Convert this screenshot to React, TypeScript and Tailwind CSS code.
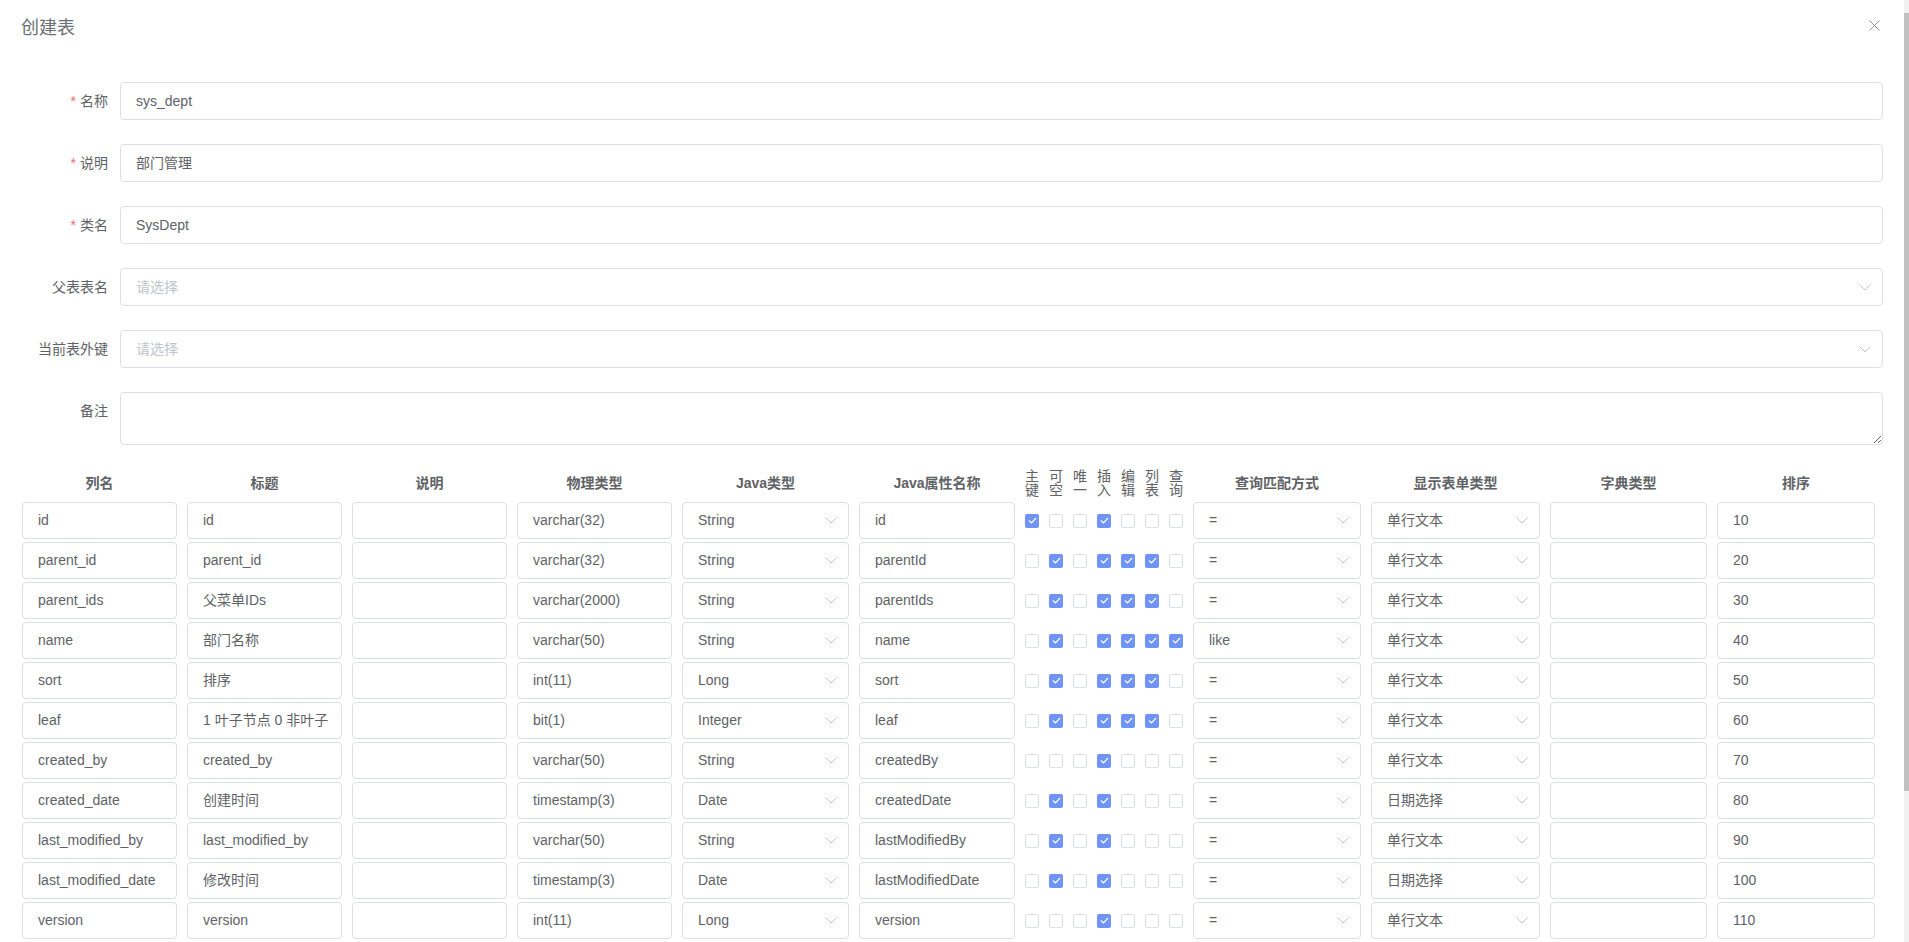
import React from "react";

const FONT = { fontFamily: '"Liberation Sans", Arial, "Noto Sans CJK SC", sans-serif' };

function Chevron() {
  return (
    <svg width="12" height="7" viewBox="0 0 12 7" className="shrink-0">
      <polyline points="0.5,0.5 6,6 11.5,0.5" fill="none" stroke="#c0c4cc" strokeWidth="1" />
    </svg>
  );
}

function Check({ on }: { on: boolean }) {
  if (on)
    return (
      <div className="w-[14px] h-[14px] rounded-[2px] bg-[#7094f6] flex items-center justify-center shrink-0">
        <svg width="9" height="7" viewBox="0 0 9 7">
          <polyline points="1,3.5 3.5,6 8,1" fill="none" stroke="#ffffff" strokeWidth="1.2" />
        </svg>
      </div>
    );
  return <div className="w-[14px] h-[14px] rounded-[2px] border border-[#dcdfe6] bg-white shrink-0" />;
}

function Cell({ w, text }: { w: string; text: string }) {
  return (
    <div className={`${w} h-[37px] border border-[#dcdfe6] rounded-[4px] px-[15px] flex items-center text-[14px] text-[#606266] whitespace-nowrap overflow-hidden shrink-0`}>
      {text}
    </div>
  );
}

function Sel({ w, text }: { w: string; text: string }) {
  return (
    <div className={`${w} h-[37px] border border-[#dcdfe6] rounded-[4px] pl-[15px] pr-[11px] flex items-center justify-between text-[14px] text-[#606266] whitespace-nowrap shrink-0`}>
      <span>{text}</span>
      <Chevron />
    </div>
  );
}

type Row = [string, string, string, string, string, string, number[], string, string, string];

const rows: Row[] = [
  ["id", "id", "", "varchar(32)", "String", "id", [1, 0, 0, 1, 0, 0, 0], "=", "单行文本", "10"],
  ["parent_id", "parent_id", "", "varchar(32)", "String", "parentId", [0, 1, 0, 1, 1, 1, 0], "=", "单行文本", "20"],
  ["parent_ids", "父菜单IDs", "", "varchar(2000)", "String", "parentIds", [0, 1, 0, 1, 1, 1, 0], "=", "单行文本", "30"],
  ["name", "部门名称", "", "varchar(50)", "String", "name", [0, 1, 0, 1, 1, 1, 1], "like", "单行文本", "40"],
  ["sort", "排序", "", "int(11)", "Long", "sort", [0, 1, 0, 1, 1, 1, 0], "=", "单行文本", "50"],
  ["leaf", "1 叶子节点 0 非叶子", "", "bit(1)", "Integer", "leaf", [0, 1, 0, 1, 1, 1, 0], "=", "单行文本", "60"],
  ["created_by", "created_by", "", "varchar(50)", "String", "createdBy", [0, 0, 0, 1, 0, 0, 0], "=", "单行文本", "70"],
  ["created_date", "创建时间", "", "timestamp(3)", "Date", "createdDate", [0, 1, 0, 1, 0, 0, 0], "=", "日期选择", "80"],
  ["last_modified_by", "last_modified_by", "", "varchar(50)", "String", "lastModifiedBy", [0, 1, 0, 1, 0, 0, 0], "=", "单行文本", "90"],
  ["last_modified_date", "修改时间", "", "timestamp(3)", "Date", "lastModifiedDate", [0, 1, 0, 1, 0, 0, 0], "=", "日期选择", "100"],
  ["version", "version", "", "int(11)", "Long", "version", [0, 0, 0, 1, 0, 0, 0], "=", "单行文本", "110"],
];

const cbHeads = [["主", "键"], ["可", "空"], ["唯", "一"], ["插", "入"], ["编", "辑"], ["列", "表"], ["查", "询"]];

function FormRow({ label, required, children, tall }: { label: string; required?: boolean; children: React.ReactNode; tall?: boolean }) {
  return (
    <div className={`flex ${tall ? "h-[53px]" : "h-[38px]"}`}>
      <div className="w-[99px] shrink-0 pr-[12px] text-right text-[14px] leading-[38px] text-[#606266] whitespace-nowrap">
        {required && <span className="text-[#f56c6c] mr-[4px]">*</span>}
        {label}
      </div>
      <div className="flex-1">{children}</div>
    </div>
  );
}

function TextBox({ value }: { value: string }) {
  return (
    <div className="h-[38px] border border-[#dcdfe6] rounded-[4px] px-[15px] flex items-center text-[14px] text-[#606266]">{value}</div>
  );
}

function SelBox() {
  return (
    <div className="h-[38px] border border-[#dcdfe6] rounded-[4px] pl-[15px] pr-[11px] flex items-center justify-between text-[14px] text-[#c0c4cc]">
      <span>请选择</span>
      <Chevron />
    </div>
  );
}

const W = {
  a: "w-[155px]",
  jt: "w-[167px]",
  jn: "w-[156px]",
  q: "w-[168px]",
  f: "w-[169px]",
  d: "w-[157px]",
  s: "w-[158px]",
};

function Head({ w, text }: { w: string; text: string }) {
  return <div className={`${w} shrink-0 text-center text-[14px] font-bold text-[#606266]`}>{text}</div>;
}

export default function App() {
  return (
    <div className="flex w-full h-[942px] overflow-hidden bg-white" style={FONT}>
      <div className="flex-1 min-w-0 flex flex-col">
        <div className="h-[82px] shrink-0 px-[21px] pt-[18px] flex justify-between items-start">
          <div className="text-[18px] leading-[20px] text-[#6b6e73]">创建表</div>
          <svg width="11" height="11" viewBox="0 0 11 11" className="mt-[2px] mr-[3px]">
            <path d="M0.5 0.5 L10.5 10.5 M10.5 0.5 L0.5 10.5" stroke="#909399" strokeWidth="1" fill="none" />
          </svg>
        </div>

        <div className="px-[21px] flex flex-col gap-[24px]">
          <FormRow label="名称" required>
            <TextBox value="sys_dept" />
          </FormRow>
          <FormRow label="说明" required>
            <TextBox value="部门管理" />
          </FormRow>
          <FormRow label="类名" required>
            <TextBox value="SysDept" />
          </FormRow>
          <FormRow label="父表表名">
            <SelBox />
          </FormRow>
          <FormRow label="当前表外键">
            <SelBox />
          </FormRow>
          <FormRow label="备注" tall>
            <textarea
              className="block w-full h-[53px] border border-[#dcdfe6] rounded-[4px] px-[15px] py-[5px] text-[14px] text-[#606266] resize-y outline-none"
              readOnly
            />
          </FormRow>
        </div>

        <div className="pl-[22px] mt-[21px]">
          <div className="flex gap-[10px] h-[34px] items-center">
            <Head w={W.a} text="列名" />
            <Head w={W.a} text="标题" />
            <Head w={W.a} text="说明" />
            <Head w={W.a} text="物理类型" />
            <Head w={W.jt} text="Java类型" />
            <Head w={W.jn} text="Java属性名称" />
            <div className="w-[158px] shrink-0 flex gap-[10px] text-[14px] leading-[14px] text-[#606266]">
              {cbHeads.map((h, i) => (
                <div key={i} className="w-[14px] flex flex-col items-center">
                  <span>{h[0]}</span>
                  <span>{h[1]}</span>
                </div>
              ))}
            </div>
            <Head w={W.q} text="查询匹配方式" />
            <Head w={W.f} text="显示表单类型" />
            <Head w={W.d} text="字典类型" />
            <Head w={W.s} text="排序" />
          </div>

          <div className="mt-[2px] flex flex-col gap-[3px]">
            {rows.map((r, i) => (
              <div key={i} className="flex gap-[10px] items-center">
                <Cell w={W.a} text={r[0]} />
                <Cell w={W.a} text={r[1]} />
                <Cell w={W.a} text={r[2]} />
                <Cell w={W.a} text={r[3]} />
                <Sel w={W.jt} text={r[4]} />
                <Cell w={W.jn} text={r[5]} />
                <div className="w-[158px] shrink-0 flex gap-[10px]">
                  {r[6].map((c, j) => (
                    <Check key={j} on={c === 1} />
                  ))}
                </div>
                <Sel w={W.q} text={r[7]} />
                <Sel w={W.f} text={r[8]} />
                <Cell w={W.d} text="" />
                <Cell w={W.s} text={r[9]} />
              </div>
            ))}
          </div>
        </div>
      </div>

      <div className="w-[5px] shrink-0 bg-[#f1f1f1] flex flex-col">
        <div className="h-[13px]" />
        <div className="h-[778px] bg-[#c1c1c1]" />
      </div>
    </div>
  );
}
